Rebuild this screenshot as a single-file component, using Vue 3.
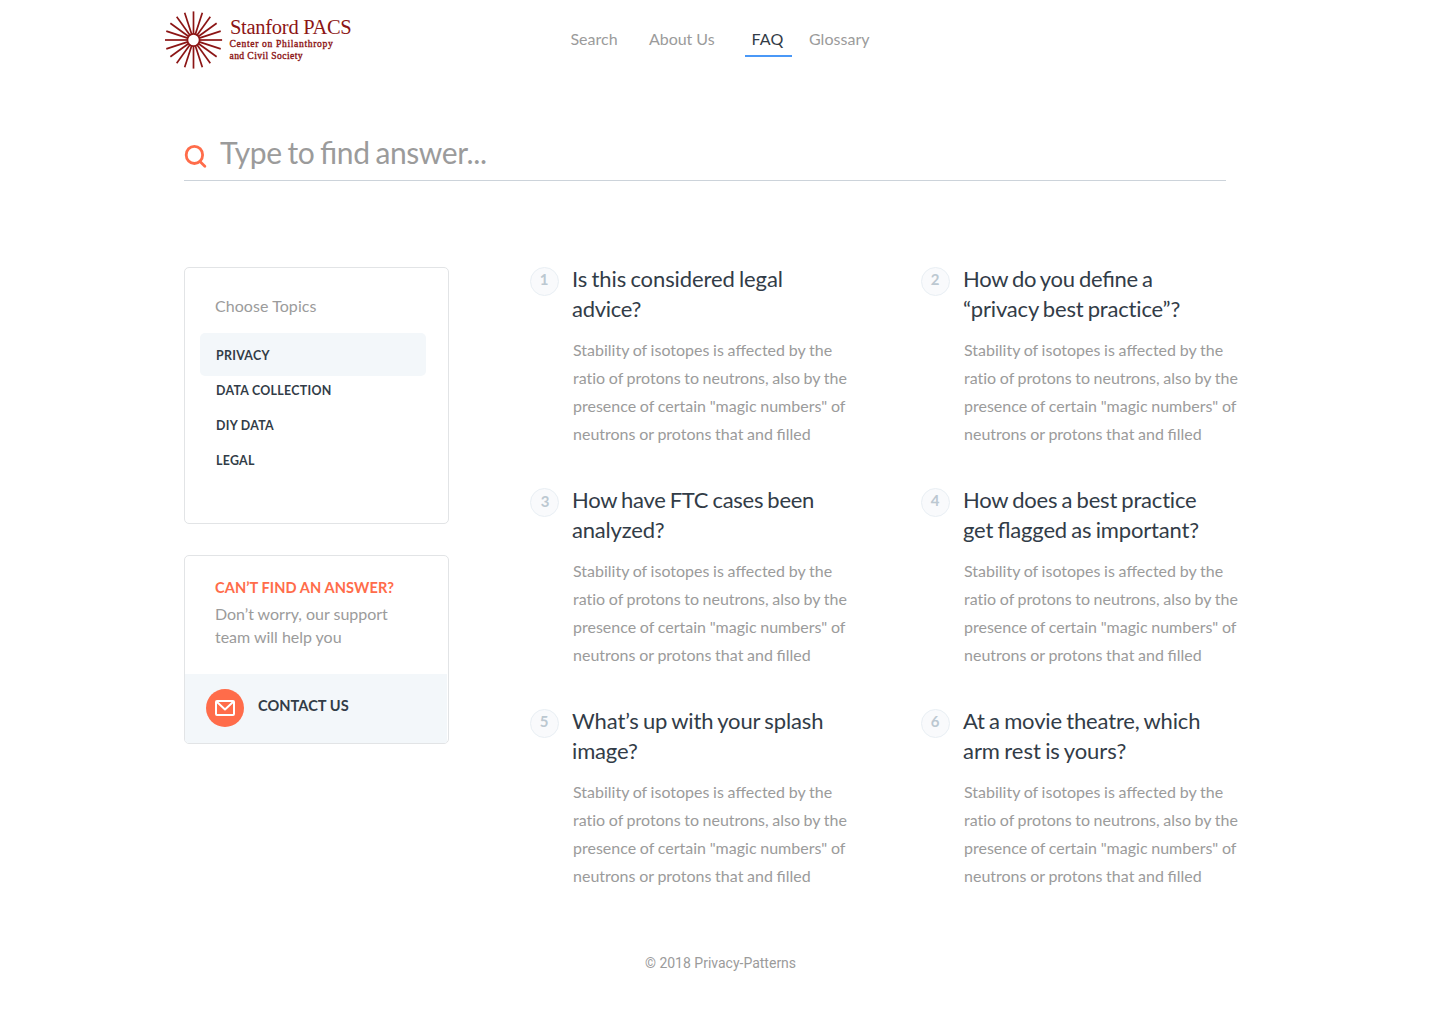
<script setup>
const nav = ['Search', 'About Us', 'FAQ', 'Glossary']
const topics = ['Privacy', 'Data collection', 'DIY data', 'Legal']
const body = [
  { text: 'Stability of isotopes is affected by the' },
  { text: 'ratio of protons to neutrons, also by the', plain: true },
  { text: 'presence of certain "magic numbers" of' },
  { text: 'neutrons or protons that and filled' },
]
// Each title is set line by line, with its tracking in px.
const questions = [
  [{ text: 'Is this considered legal', track: -0.1 }, { text: 'advice?', track: -0.3 }],
  [{ text: 'How do you define a', track: -0.27 }, { text: '“privacy best practice”?', track: -0.18, plain: true }],
  [{ text: 'How have FTC cases been', track: -0.27 }, { text: 'analyzed?', track: -0.2 }],
  [{ text: 'How does a best practice', track: -0.2, plain: true }, { text: 'get flagged as important?', track: -0.16 }],
  [{ text: 'What’s up with your splash', track: -0.12 }, { text: 'image?', track: -0.15 }],
  [{ text: 'At a movie theatre, which', track: -0.15 }, { text: 'arm rest is yours?', track: -0.04 }],
]
const rays = Array.from({ length: 20 }, (_, i) => i * 18)
</script>

<template>
  <div class="page">
    <header class="header">
      <a class="logo">
        <svg width="58" height="58" viewBox="-28.5 -29 58 58" fill="none" stroke="#8c1515">
          <line v-for="a in rays" :key="a" x1="0" y1="-6" x2="0" y2="-28.6" stroke-width="1.7" :transform="`rotate(${a})`" />
          <circle r="6.1" stroke-width="1.7" />
        </svg>
        <span class="logo-text">
          <span class="logo-name">Stanford PACS</span>
          <span class="logo-sub">Center on Philanthropy</span>
          <span class="logo-sub second">and Civil Society</span>
        </span>
      </a>
      <nav class="nav">
        <a v-for="n in nav" :key="n" :class="['nav-item', 'nav-' + n.split(' ')[0].toLowerCase()]">{{ n }}</a>
      </nav>
    </header>

    <div class="search">
      <svg width="23" height="24" viewBox="0 0 23 24" fill="none" stroke="#ff6c4a" stroke-width="2.8" stroke-linecap="round">
        <ellipse cx="10.4" cy="10.9" rx="8.2" ry="8.6" />
        <path d="M16 17.6L20.8 22.2" />
      </svg>
      <span class="placeholder">Type to find answer...</span>
    </div>

    <main class="content">
      <aside class="side">
        <section class="card topics">
          <p class="label">Choose Topics</p>
          <ul>
            <li v-for="(t, i) in topics" :key="t" :class="{ active: i === 0 }">{{ t }}</li>
          </ul>
        </section>
        <section class="card help">
          <div class="help-text">
            <h3>Can’t find an answer?</h3>
            <p>Don’t worry, our support<br>team will help you</p>
          </div>
          <a class="contact">
            <span class="mail">
              <svg width="20" height="16" viewBox="0 0 20 16" fill="none" stroke="#fff" stroke-width="2" stroke-linejoin="round">
                <rect x="1" y="1" width="18" height="14" rx="1" />
                <path d="M2 2L10 9.4L18 2" />
              </svg>
            </span>
            <span class="contact-label">Contact us</span>
          </a>
        </section>
      </aside>

      <div class="faq">
        <article v-for="(q, i) in questions" :key="i" class="item">
          <span :class="['badge', { shifted: i === 2 }]">{{ i + 1 }}</span>
          <div class="entry">
            <h2><span v-for="l in q" :key="l.text" :class="{ plain: l.plain }" :style="{ letterSpacing: l.track + 'px' }">{{ l.text }}</span></h2>
            <p><span v-for="l in body" :key="l.text" :class="{ plain: l.plain }">{{ l.text }}</span></p>
          </div>
        </article>
      </div>
    </main>

    <footer class="footer">© 2018 Privacy-Patterns</footer>
  </div>
</template>

<style>
body { background: #fff; }
</style>

<style scoped>
.page { width: 1440px; height: 1024px; overflow: hidden; display: flex; flex-direction: column; font-family: Lato, sans-serif; font-size: 16px; color: #9b9b9b; font-feature-settings: "liga" 1; }
p, h2, h3, ul { margin: 0; padding: 0; font-weight: 400; list-style: none; }
.header { display: flex; height: 81px; align-items: flex-start; }
.logo { display: flex; width: 405.4px; margin-left: 165px; padding-top: 11px; box-sizing: border-box; }
.logo-text { display: flex; flex-direction: column; margin-left: 7px; padding-top: 5px; color: #8c1515; font-family: "Liberation Serif", serif; white-space: nowrap; }
.logo-name { font-size: 20.5px; line-height: 22px; letter-spacing: -.28px; }
.logo-sub { font-size: 9.6px; line-height: 12px; letter-spacing: .65px; margin-left: -.5px; -webkit-text-stroke: .35px #8c1515; }
.logo-sub.second { letter-spacing: .4px; }
.nav { display: flex; padding-top: 27px; line-height: 24px; }
.nav-item { white-space: nowrap; letter-spacing: .04px; }
.nav-search { width: 78.6px; }
.nav-about { width: 96px; letter-spacing: -.04px; }
.nav-faq { width: 40.6px; padding: 0 0 4px 6.4px; margin-right: 17px; border-bottom: 2px solid #4a98f7; color: #323c47; letter-spacing: .2px; }
.search { display: flex; width: 1042px; height: 99px; margin-left: 184px; border-bottom: 1px solid #ccd3da; }
.search svg { margin-top: 63px; }
.placeholder { margin: 52px 0 0 13px; font-size: 30px; line-height: 38px; letter-spacing: -.4px; word-spacing: -1.5px; }
.content { display: flex; margin: 84px 0 0 184px; }
.side { display: flex; flex-direction: column; gap: 31px; width: 265px; margin-top: 2px; }
.card { box-sizing: border-box; border: 1px solid #e2e4e6; border-radius: 5px; overflow: hidden; }
.topics { height: 257px; padding: 26px 22px 0 15px; }
.label { padding-left: 15px; line-height: 24px; margin-bottom: 15px; letter-spacing: .06px; }
.topics li { height: 35px; padding-left: 16px; line-height: 29px; font-size: 12.4px; font-weight: 700; letter-spacing: .28px; text-transform: uppercase; color: #323c47; }
.topics li.active { height: 43px; line-height: 45px; background: #f3f7fa; border-radius: 5px; }
.help { height: 189px; }
.help-text { height: 98px; padding: 20px 0 0 30px; }
.help h3 { font-size: 14.6px; line-height: 24px; font-weight: 700; letter-spacing: .07px; text-transform: uppercase; color: #ff6c4a; }
.help p { margin-top: 2px; line-height: 23px; letter-spacing: -.02px; }
.contact { display: flex; height: 69px; margin-right: 1px; padding: 15px 0 0 21px; box-sizing: border-box; background: #f3f7fa; }
.mail { display: flex; align-items: center; justify-content: center; width: 38px; height: 38px; border-radius: 50%; background: #ff6c4a; }
.contact-label { margin-left: 14px; font-size: 14.6px; line-height: 34px; font-weight: 700; letter-spacing: .03px; text-transform: uppercase; color: #323c47; }
.faq { display: grid; grid-template-columns: 391px 391px; grid-auto-rows: 221px; margin-left: 81px; }
.item { display: flex; }
.badge { box-sizing: border-box; flex: none; width: 29px; height: 29px; margin: 2px 13px 0 0; padding-right: 1px; border: 1px solid #e9eff4; border-radius: 50%; background: #f9fafc; text-align: center; font-size: 15px; line-height: 23px; font-weight: 700; color: #bcc8d1; }
.badge.shifted { padding: 1px 0 0 1px; }
.entry { margin-top: -1px; }
.item h2 { font-size: 22px; line-height: 30px; word-spacing: -1.2px; color: #323c47; }
.item h2 span, .item p span { display: block; white-space: nowrap; }
.item .plain { font-feature-settings: "liga" 0; font-variant-ligatures: none; }
.item p { margin: 12px 0 0 1px; line-height: 28px; word-spacing: -.4px; }
.item p .plain { word-spacing: -.5px; }
.footer { margin-top: 23px; text-align: center; font: 14px/24px Roboto, sans-serif; padding-left: 1px; }
</style>
